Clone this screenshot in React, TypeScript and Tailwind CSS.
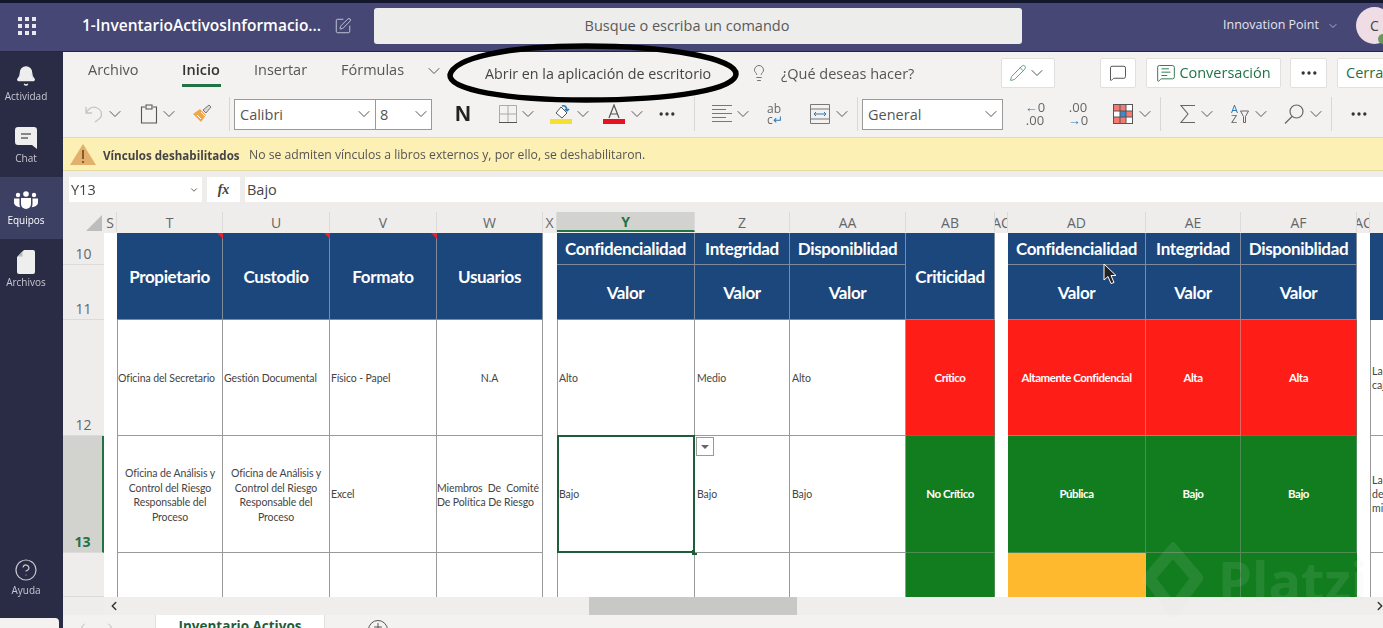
import { Bell, ChevronDown, ChevronLeft, ChevronRight, CircleHelp, Lightbulb, MessageSquare, MessageSquareText, Pencil, SquarePen, MoreHorizontal, Plus } from 'lucide-react'

const gridCols = 'grid grid-cols-[41px_13px_106px_107px_107px_106px_14px_138px_95px_116px_89px_13px_138px_95px_116px_13px_13px]'

function Chev({ className = '' }: { className?: string }) {
  return <ChevronDown className={`h-5 w-5 shrink-0 text-[#555] ${className}`} strokeWidth={1.2} />
}

function Dots({ className = '' }: { className?: string }) {
  return <MoreHorizontal className={`h-5 w-5 shrink-0 text-[#333] ${className}`} strokeWidth={2} />
}

function Sep({ className = '' }: { className?: string }) {
  return <div className={`h-[34px] w-px shrink-0 bg-[#d8d7d5] ${className}`} />
}

function RailItem({ label, active, icon }: { label: string; active?: boolean; icon: React.ReactNode }) {
  return (
    <div className={`flex h-[62px] flex-col items-center justify-center pb-[2px] pr-[11px] ${active ? 'bg-[#3c4063] text-white' : 'text-[#c8c8d0]'}`}>
      <div className="flex h-6 items-center justify-center">{icon}</div>
      <span className="mt-[2px] text-[10px] leading-3">{label}</span>
    </div>
  )
}

function Rail() {
  return (
    <div className="flex w-[63px] shrink-0 flex-col bg-[#2a2b45] pt-px">
      <RailItem label="Actividad" icon={<Bell className="h-[22px] w-[22px] fill-[#eee] text-[#eee]" strokeWidth={1.5} />} />
      <RailItem
        label="Chat"
        icon={
          <svg viewBox="0 0 22 22" className="h-[22px] w-[22px]">
            <path d="M3 0h16a3 3 0 0 1 3 3v19l-5-4H3a3 3 0 0 1-3-3V3a3 3 0 0 1 3-3z" fill="#eee" />
            <path d="M6 7h10M6 11h7" stroke="#666" strokeWidth="1.3" />
          </svg>
        }
      />
      <RailItem
        label="Equipos"
        active
        icon={
          <svg viewBox="0 0 24 18" className="h-[18px] w-6" fill="#fff">
            <circle cx="12" cy="3" r="2.800" />
            <circle cx="4" cy="4" r="2.200" />
            <circle cx="20" cy="4" r="2.200" />
            <path d="M7 7h10v6a5 5 0 0 1-10 0z" />
            <path d="M0 7.500h5.500V13c0 1.500.3 2.400.8 3.200C2.800 16.200 0 14 0 11.500zM24 7.500h-5.500V13c0 1.500-.3 2.400-.8 3.200 3.500 0 6.300-2.200 6.300-4.700z" />
          </svg>
        }
      />
      <RailItem
        label="Archivos"
        icon={
          <svg viewBox="0 0 18 24" className="h-6 w-[18px]">
            <path d="M7 0h9a2 2 0 0 1 2 2v20a2 2 0 0 1-2 2H2a2 2 0 0 1-2-2V7z" fill="#eee" />
            <path d="M5.500 1v5a.5.5 0 0 1-.5.5H1z" fill="#bbb" />
          </svg>
        }
      />
      <div className="flex-1" />
      <div className="mb-[22px] flex flex-col items-center pr-[11px] text-[#c8c8d0]">
        <CircleHelp className="h-6 w-6" strokeWidth={1.2} />
        <span className="mt-[2px] text-[10px] leading-3">Ayuda</span>
      </div>
      <div className="h-[10px] w-[59px] rounded-tr-sm bg-[#f3f2f1]" />
    </div>
  )
}

function TopBar() {
  return (
    <div className="flex h-[52px] shrink-0 items-center border-t-[3px] border-b border-t-[#14162e] border-b-[#23244a] bg-[#464775] pb-[3px]">
      <div className="ml-[18px] grid w-[18px] shrink-0 grid-cols-3 gap-[3px]">
        {Array.from({ length: 9 }).map((_, i) => (
          <span key={i} className="h-1 w-1 bg-[#e8e8f0]" />
        ))}
      </div>
      <span className="ml-[46px] w-[240px] shrink-0 whitespace-nowrap text-[15.500px] font-semibold text-white">1-InventarioActivosInformacio...</span>
      <SquarePen className="ml-[12px] h-[18px] w-[18px] shrink-0 text-[#d0d0e0]" strokeWidth={1.2} />
      <div className="ml-[22px] flex h-[36px] w-[648px] shrink-0 items-center justify-center rounded-[3px] bg-[#ededeb] pr-[22px] text-[14.500px] text-[#5a5a5a]">
        Busque o escriba un comando
      </div>
      <span className="ml-[201px] w-[98px] shrink-0 whitespace-nowrap text-[12.500px] text-[#e4e4ee]">Innovation Point</span>
      <ChevronDown className="ml-[6px] h-3 w-3 shrink-0 text-[#d0d0e0]" strokeWidth={1.5} />
      <div className="relative ml-[17px] flex h-[37px] w-[37px] shrink-0 items-center justify-center rounded-full bg-[#eedde4] text-[14px] text-[#444]">
        C
        <span className="absolute bottom-0 left-[22px] h-[10px] w-[10px] rounded-full bg-[#6a9a5b]" />
      </div>
    </div>
  )
}

function ToolButton({ children, className = '' }: { children: React.ReactNode; className?: string }) {
  return <div className={`flex h-[30px] shrink-0 items-center justify-center rounded-[2px] border border-[#e1e0de] bg-white ${className}`}>{children}</div>
}

function Ribbon() {
  return (
    <div className="h-[85px] shrink-0 overflow-hidden bg-[#f3f2f1] text-[14.500px] text-[#555]">
      <div className="flex h-[40px] items-center whitespace-nowrap pt-[2px]">
        <span className="ml-[25px] w-[51px] shrink-0 pb-[6px]">Archivo</span>
        <div className="relative ml-[43px] flex h-full w-[39px] shrink-0 items-center pb-[6px] font-semibold text-[#333]">
          Inicio
          <span className="absolute bottom-[5px] left-0 h-[3px] w-full bg-[#217346]" />
        </div>
        <span className="ml-[33px] w-[53px] shrink-0 pb-[6px]">Insertar</span>
        <span className="ml-[34px] w-[62px] shrink-0 pb-[6px]">Fórmulas</span>
        <Chev className="ml-[21px] mb-[4px]" />
        <span className="ml-[41px] w-[227px] shrink-0 pt-[2px] text-[14.300px] text-[#444]">Abrir en la aplicación de escritorio</span>
        <Lightbulb className="ml-[38px] h-[18px] w-[18px] shrink-0 text-[#666]" strokeWidth={1.2} />
        <span className="ml-[13px] w-[133px] shrink-0 pt-px">¿Qué deseas hacer?</span>
        <ToolButton className="ml-[87px] w-[54px]">
          <Pencil className="h-[18px] w-[18px] text-[#4b8a66]" strokeWidth={1.1} />
          <Chev />
        </ToolButton>
        <ToolButton className="ml-[45px] w-[36px]">
          <MessageSquare className="h-[18px] w-[18px] text-[#444]" strokeWidth={1.2} />
        </ToolButton>
        <ToolButton className="ml-[10px] w-[135px] gap-[3px] font-medium text-[#217346]">
          <MessageSquareText className="h-5 w-5" strokeWidth={1.1} />
          Conversación
        </ToolButton>
        <ToolButton className="ml-[9px] w-[37px]">
          <Dots />
        </ToolButton>
        <ToolButton className="ml-[10px] w-[60px] justify-start pl-[8px] font-medium text-[#217346]">Cerrar</ToolButton>
      </div>
      <div className="flex h-[45px] items-center pb-[1px]">
        <svg viewBox="0 0 20 20" className="ml-[22px] h-5 w-5 shrink-0" fill="none" stroke="#c4c4c2" strokeWidth="1.300">
          <path d="M1 3v6h6M1 9c3-5 7-7 11-5 5 2 6 8 2 11l-4 3" />
        </svg>
        <Chev />
        <svg viewBox="0 0 20 20" className="ml-[14px] h-5 w-5 shrink-0" fill="none" stroke="#555" strokeWidth="1.100">
          <path d="M6 3H2.500v16h15V3H14M7 1h6v4H7z" />
        </svg>
        <Chev />
        <svg viewBox="0 0 20 20" className="ml-[13px] h-5 w-5 shrink-0">
          <path d="M1 10l8 8 5-7-6-6z" fill="#f0a64a" />
          <path d="M9 8l5 5M5 11l4 4" stroke="#fff" strokeWidth="1" />
          <path d="M11 6l6-5 2 2-5 6z" fill="#d8d8d8" stroke="#777" strokeWidth="1" />
        </svg>
        <Sep className="ml-[17px]" />
        <div className="ml-[4px] flex h-[31px] w-[198px] shrink-0 items-center border border-[#999] bg-white">
          <div className="flex h-full w-[141px] items-center justify-between border-r border-[#999] pl-[5px] pr-[1px]"><span className="pt-px">Calibri</span> <Chev /></div>
          <div className="flex flex-1 items-center justify-between pl-[4px]"><span className="pt-px">8</span> <Chev /></div>
        </div>
        <span className="ml-[23px] w-[16px] shrink-0 font-['Liberation_Sans',sans-serif] text-[22px] font-bold leading-none text-[#222]">N</span>
        <svg viewBox="0 0 18 18" className="ml-[28px] h-[18px] w-[18px] shrink-0" fill="none" stroke="#aaa" strokeWidth="1">
          <path d="M.5.5h17v17H.5zM9 .5v17M.5 9h17" />
          <path d="M0 17.500h18" stroke="#555" />
        </svg>
        <Chev className="ml-[1px]" />
        <svg viewBox="0 0 22 20" className="ml-[12px] h-5 w-[22px] shrink-0">
          <path d="M11 3l6 6-5 5-6-5z" fill="#fff" stroke="#555" />
          <path d="M12 2c3-1 5 1 5 5M17 7l-2-2M17 7l2-2" fill="none" stroke="#2a7ab8" strokeWidth="1.500" />
          <rect x="0" y="15" width="22" height="5" fill="#f5e02f" />
        </svg>
        <Chev className="ml-[1px]" />
        <svg viewBox="0 0 22 20" className="ml-[10px] h-5 w-[22px] shrink-0">
          <path d="M6 14L11 1l5 13M8 10h6" fill="none" stroke="#555" strokeWidth="1.200" />
          <rect x="0" y="15" width="22" height="5" fill="#e81123" />
        </svg>
        <Chev className="ml-[2px]" />
        <Dots className="ml-[10px]" />
        <Sep className="ml-[17px]" />
        <svg viewBox="0 0 20 20" className="ml-[17px] h-5 w-5 shrink-0" stroke="#777" strokeWidth="1.100">
          <path d="M0 1.500h20M0 5.500h14M0 9.500h20M0 13.500h14M0 17.500h20" />
        </svg>
        <Chev className="ml-[1px]" />
        <span className="ml-[14px] flex h-[22px] w-5 shrink-0 flex-col text-[12px] leading-[11px] text-[#666]">ab<span className="text-[#2a7ab8]"><span className="text-[#666]">c</span>↵</span></span>
        <svg viewBox="0 0 20 20" className="ml-[23px] h-5 w-5 shrink-0" fill="none" stroke="#2a7ab8">
          <path d="M.5.5h19v19H.5zM.5 5h19M.5 15h19" stroke="#777" />
          <path d="M4 10h12M4 10l2-2M4 10l2 2M16 10l-2-2M16 10l-2 2" />
        </svg>
        <Chev className="ml-[2px]" />
        <Sep className="ml-[5px]" />
        <div className="ml-[4px] flex h-[31px] w-[141px] shrink-0 items-center justify-between border border-[#999] bg-white pl-[5px] pr-[1px]"><span className="pt-px">General</span> <Chev /></div>
        <div className="ml-[22px] flex w-[20px] shrink-0 flex-col items-center text-[13px] leading-[13px] text-[#666]"><span><span className="text-[#2a7ab8]">←</span>0</span><span>.00</span></div>
        <div className="ml-[23px] flex w-[20px] shrink-0 flex-col items-center text-[13px] leading-[13px] text-[#666]"><span>.00</span><span><span className="text-[#2a7ab8]">→</span>0</span></div>
        <svg viewBox="0 0 20 20" className="ml-[25px] h-5 w-5 shrink-0" stroke="#555" strokeWidth="1">
          <rect x=".5" y=".5" width="19" height="19" fill="#fff" />
          <path d="M1 1h6v6H1zM7 1h6v6H7zM1 13h6v6H1zM7 13h6v6H7zM13 7h6v6h-6z" fill="#f47a72" strokeWidth="0" />
          <rect x="7" y="7" width="6" height="6" fill="#3a8ad0" stroke="none" />
          <path d="M7 1v18M13 1v18M1 7h18M1 13h18" />
        </svg>
        <Chev className="ml-[2px]" />
        <Sep className="ml-[5px]" />
        <svg viewBox="0 0 15 20" className="ml-[19px] h-5 w-[15px] shrink-0" fill="none" stroke="#666" strokeWidth="1.100">
          <path d="M15 1.500H1l7 8.500-7 8.500h14" />
        </svg>
        <Chev className="ml-[2px]" />
        <span className="ml-[14px] flex w-[9px] shrink-0 flex-col text-[11px] leading-[10px] text-[#666]"><span className="text-[#2a7ab8]">A</span>Z</span>
        <svg viewBox="0 0 9 14" className="mt-[6px] h-[14px] w-[9px] shrink-0" fill="none" stroke="#666"><path d="M.5 1h8L5.500 6.500v6h-2v-6z" /></svg>
        <Chev className="ml-[2px]" />
        <svg viewBox="0 0 20 20" className="ml-[13px] h-5 w-5 shrink-0" fill="none" stroke="#666" strokeWidth="1.200">
          <circle cx="12.500" cy="7.500" r="6.500" />
          <path d="M8 12.500L1 19.500" />
        </svg>
        <Chev className="ml-[2px]" />
        <Sep className="ml-[5px]" />
        <Dots className="ml-[17px]" />
      </div>
    </div>
  )
}

function Banner() {
  return (
    <div className="flex h-[34px] shrink-0 items-center border-y border-[#e6dca0] bg-[#fdf0b4] text-[12.200px] text-[#555]">
      <svg viewBox="0 0 26 21" className="ml-[7px] h-[21px] w-[26px] shrink-0">
        <path d="M13 0l13 21H0z" fill="#e3b06c" />
        <path d="M13 6v9M13 17v2" stroke="#5a3a18" strokeWidth="1.400" />
      </svg>
      <span className="ml-[7px] w-[137px] whitespace-nowrap pt-[3px] text-[11.600px] font-bold text-[#444]">Vínculos deshabilitados</span>
      <span className="ml-[9px] whitespace-nowrap pt-[3px]">No se admiten vínculos a libros externos y, por ello, se deshabilitaron.</span>
    </div>
  )
}

function FormulaBar() {
  return (
    <div className="flex h-[34px] shrink-0 items-center bg-[#eeedeb] pb-[3px] pt-[6px] text-[14.500px] text-[#444]">
      <div className="ml-[6px] flex h-[25px] w-[133px] items-center justify-between bg-white pl-[2px] pr-[3px]">
        Y13
        <ChevronDown className="h-[10px] w-[10px]" />
      </div>
      <div className="ml-[5px] flex h-[25px] w-[33px] items-center justify-center bg-white font-['Liberation_Serif',serif] text-[14px] font-bold italic">fx</div>
      <div className="ml-[5px] flex h-[25px] flex-1 items-center bg-white pl-[2px]">Bajo</div>
    </div>
  )
}

const letters = ['S', 'T', 'U', 'V', 'W', 'X', 'Y', 'Z', 'AA', 'AB', 'AC', 'AD', 'AE', 'AF', 'AC ']

function ColumnHeaders() {
  return (
    <div className={`${gridCols} h-[28px] shrink-0 bg-[#eeedeb] pb-px pt-[7px] text-[14px] text-[#666]`}>
      <div className="flex items-end justify-end pb-[1px] pr-[2px]">
        <div className="h-0 w-0 border-b-[16px] border-l-[16px] border-b-[#bdbdbd] border-l-transparent" />
      </div>
      {letters.map((l) => (
        <div
          key={l}
          className={`flex items-center justify-center overflow-hidden border-r border-[#dcdbd9] ${l === 'Y' ? 'border-b-2 border-b-[#217346] bg-[#d2d2cf] font-bold text-[#217346]' : ''}`}
        >
          {l}
        </div>
      ))}
      <div />
    </div>
  )
}

const headClass = 'flex items-center justify-center border-r border-b border-[#7f8a9a] bg-[#1b477c] pt-px text-[17px] font-bold tracking-[-0.35px] text-white'
const cellClass = 'flex items-center whitespace-nowrap border-r border-b border-[#9a9a9a] bg-white pt-[2px] text-[10.500px] tracking-[-0.1px] text-[#444]'
const colorText = 'flex items-center justify-center border-r border-b text-[11.500px] font-bold tracking-[-0.45px] text-white'

function RowNum({ n, row, active }: { n?: string; row: string; active?: boolean }) {
  return (
    <div className={`col-start-1 flex items-end justify-center border-b border-[#dcdbd9] text-[14px] leading-5 font-['Open_Sans',sans-serif] ${row} ${active ? 'border-r-2 border-r-[#217346] bg-[#d2d2cf] font-bold text-[#217346]' : 'bg-[#eeedeb] text-[#666]'}`}>
      {n}
    </div>
  )
}

function Red() {
  return <span className="absolute -right-px top-0 h-0 w-0 border-l-[6px] border-t-[6px] border-l-transparent border-t-[#e8222a]" />
}

const blankCols = ['col-start-3 border-l', 'col-start-4', 'col-start-5', 'col-start-6', 'col-start-8 border-l', 'col-start-9', 'col-start-10']

function ProcessOwner({ className }: { className: string }) {
  return (
    <div className={`${cellClass} ${className} justify-center text-center leading-[14.500px]`}>
      <span>
        Oficina de Análisis y<br />
        Control del Riesgo<br />
        Responsable del<br />
        Proceso
      </span>
    </div>
  )
}

function Sheet() {
  return (
    <div className="relative flex min-h-0 flex-1 flex-col bg-white">
      <ColumnHeaders />
      <div className={`${gridCols} grid-rows-[32px_55px_116px_117px_44px] overflow-hidden font-['Lato','Liberation_Sans',sans-serif]`}>
        <RowNum n="10" row="row-start-1" />
        <RowNum n="11" row="row-start-2" />
        <RowNum n="12" row="row-start-3" />
        <RowNum n="13" row="row-start-4" active />
        <RowNum row="row-start-5" />

        <div className={`${headClass} relative col-start-3 row-span-2 row-start-1`}>Propietario<Red /></div>
        <div className={`${headClass} relative col-start-4 row-span-2 row-start-1`}>Custodio<Red /></div>
        <div className={`${headClass} relative col-start-5 row-span-2 row-start-1`}>Formato<Red /></div>
        <div className={`${headClass} col-start-6 row-span-2 row-start-1`}>Usuarios</div>

        <div className={`${headClass} col-start-8 row-start-1`}>Confidencialidad</div>
        <div className={`${headClass} col-start-9 row-start-1`}>Integridad</div>
        <div className={`${headClass} col-start-10 row-start-1`}>Disponiblidad</div>
        <div className={`${headClass} col-start-8 row-start-2`}>Valor</div>
        <div className={`${headClass} col-start-9 row-start-2`}>Valor</div>
        <div className={`${headClass} col-start-10 row-start-2`}>Valor</div>
        <div className={`${headClass} col-start-11 row-span-2 row-start-1`}>Criticidad</div>

        <div className={`${headClass} col-start-13 row-start-1`}>Confidencialidad</div>
        <div className={`${headClass} col-start-14 row-start-1`}>Integridad</div>
        <div className={`${headClass} col-start-15 row-start-1`}>Disponiblidad</div>
        <div className={`${headClass} col-start-13 row-start-2`}>Valor</div>
        <div className={`${headClass} col-start-14 row-start-2`}>Valor</div>
        <div className={`${headClass} col-start-15 row-start-2`}>Valor</div>
        <div className="col-start-17 row-span-2 row-start-1 bg-[#1b477c]" />

        <div className={`${cellClass} col-start-3 row-start-3 justify-center border-l pr-[7px]`}>Oficina del Secretario</div>
        <div className={`${cellClass} col-start-4 row-start-3 pl-px`}>Gestión Documental</div>
        <div className={`${cellClass} col-start-5 row-start-3 pl-px`}>Físico - Papel</div>
        <div className={`${cellClass} col-start-6 row-start-3 justify-center`}>N.A</div>
        <div className={`${cellClass} col-start-8 row-start-3 border-l pl-px`}>Alto</div>
        <div className={`${cellClass} col-start-9 row-start-3 pl-[2px]`}>Medio</div>
        <div className={`${cellClass} col-start-10 row-start-3 pl-[2px]`}>Alto</div>
        <div className={`${colorText} col-start-11 row-start-3 border-[#9a5a50] bg-[#fe1e17]`}>Crítico</div>
        <div className={`${colorText} col-start-13 row-start-3 border-[#e06a60] bg-[#fe1e17]`}>Altamente Confidencial</div>
        <div className={`${colorText} col-start-14 row-start-3 border-[#e06a60] bg-[#fe1e17]`}>Alta</div>
        <div className={`${colorText} col-start-15 row-start-3 border-[#9a5a50] bg-[#fe1e17]`}>Alta</div>
        <div className="col-start-17 row-start-3 flex items-center overflow-hidden whitespace-nowrap border-b border-l border-[#9a9a9a] pl-px text-[10.500px] leading-[14px] text-[#444]"><span>La<br />caj</span></div>

        <ProcessOwner className="col-start-3 row-start-4 border-l" />
        <ProcessOwner className="col-start-4 row-start-4" />
        <div className={`${cellClass} col-start-5 row-start-4 pl-px`}>Excel</div>
        <div className={`${cellClass} col-start-6 row-start-4 leading-[14.500px]`}>
          <span>Miembros&nbsp;&nbsp;De&nbsp;&nbsp;Comité<br />De Política De Riesgo</span>
        </div>
        <div className={`${cellClass} relative col-start-8 row-start-4 border-l pl-px`}>
          Bajo
          <div className="absolute -inset-px border-2 border-[#1f5c3a]" />
          <div className="absolute -bottom-[3px] -right-[3px] h-[5px] w-[5px] bg-[#1f5c3a]" />
        </div>
        <div className={`${cellClass} relative col-start-9 row-start-4 pl-[2px]`}>
          Bajo
          <div className="absolute left-px top-px flex h-[19px] w-[18px] items-center justify-center border border-[#999] bg-white">
            <div className="h-0 w-0 border-x-4 border-t-4 border-x-transparent border-t-[#666]" />
          </div>
        </div>
        <div className={`${cellClass} col-start-10 row-start-4 pl-[2px]`}>Bajo</div>
        <div className={`${colorText} col-start-11 row-start-4 border-[#4d8d55] bg-[#117d1e]`}>No Crítico</div>
        <div className={`${colorText} col-start-13 row-start-4 border-[#4d8d55] bg-[#117d1e]`}>Pública</div>
        <div className={`${colorText} col-start-14 row-start-4 border-[#4d8d55] bg-[#117d1e]`}>Bajo</div>
        <div className={`${colorText} col-start-15 row-start-4 border-[#4d8d55] bg-[#117d1e]`}>Bajo</div>
        <div className="col-start-17 row-start-4 flex items-center overflow-hidden whitespace-nowrap border-b border-l border-[#9a9a9a] pl-px text-[10.500px] leading-[14px] text-[#444]"><span>La<br />del<br />mis</span></div>

        {blankCols.map((c) => (
          <div key={c} className={`row-start-5 border-r border-[#9a9a9a] bg-white ${c}`} />
        ))}
        <div className="col-start-11 row-start-5 border-r border-[#4d8d55] bg-[#117d1e]" />
        <div className="col-start-13 row-start-5 bg-[#ffb92e]" />
        <div className="col-start-14 row-start-5 border-r border-[#4d8d55] bg-[#117d1e]" />
        <div className="col-start-15 row-start-5 bg-[#117d1e]" />
        <div className="col-start-17 row-start-5 border-l border-[#9a9a9a]" />
      </div>
      <div className="flex h-[18px] shrink-0 items-center border-l-[41px] border-[#eeedeb] bg-[#efeeec] text-[#333]">
        <ChevronLeft className="ml-[3px] h-[14px] w-[14px]" strokeWidth={2.5} />
        <div className="ml-[468px] h-full w-[208px] bg-[#c8c8c6]" />
        <div className="flex-1" />
        <ChevronRight className="mr-[-4px] h-[14px] w-[14px]" strokeWidth={2.5} />
      </div>
      <div className="flex h-[13px] shrink-0 items-start overflow-hidden bg-[#f3f2f1]">
        <ChevronLeft className="ml-[14px] mt-[6px] h-3 w-3 text-[#bbb]" />
        <ChevronRight className="ml-[15px] mt-[6px] h-3 w-3 text-[#bbb]" />
        <div className="ml-[39px] flex h-[13px] w-[170px] justify-center border-x border-[#e1e0de] bg-white pt-px text-[13.500px] font-bold leading-5 text-[#1f5c3a]">Inventario Activos</div>
        <div className="ml-[43px] mt-[5px] flex h-5 w-5 items-start justify-center rounded-full border border-[#555]">
          <Plus className="h-3 w-3 text-[#555]" />
        </div>
      </div>
      <Overlays />
    </div>
  )
}

function Overlays() {
  return (
    <>
      {/* mouse pointer */}
      <svg viewBox="0 0 14 22" className="absolute left-[1040px] top-[58px] h-[22px] w-[14px]">
        <path d="M1 1v16l4-3.500 3 7 3-1-3-7h5z" fill="#222" stroke="#fff" strokeWidth="1" />
      </svg>
      {/* watermark */}
      <div className="pointer-events-none absolute left-[1080px] top-[337px] flex items-center text-[#dde0dd] opacity-10">
        <svg viewBox="0 0 60 76" className="h-[76px] w-[60px]" fill="none" stroke="#dde0dd" strokeWidth="12">
          <path d="M30 8L54 36 30 68 6 36z" />
        </svg>
        <span className="ml-[15px] text-[54px] font-bold leading-none">Platzi</span>
      </div>
    </>
  )
}

export default function App() {
  return (
    <div className="relative flex h-[628px] w-[1383px] flex-col overflow-hidden font-['Open_Sans','Liberation_Sans',sans-serif] blur-[0.4px]">
      <TopBar />
      <div className="flex min-h-0 flex-1">
        <Rail />
        <div className="flex min-w-0 flex-1 flex-col">
          <Ribbon />
          <Banner />
          <FormulaBar />
          <Sheet />
        </div>
      </div>
      {/* hand drawn circle around the button */}
      <svg viewBox="0 0 294 66" className="absolute left-[446px] top-[40px] h-[66px] w-[294px]" fill="none">
        <path d="M4 35C8 18 60 6 140 6c80 0 150 12 150 28 0 15-60 26-150 26C60 60 3 50 4 35z" stroke="#000" strokeWidth="5.500" />
      </svg>
    </div>
  )
}
